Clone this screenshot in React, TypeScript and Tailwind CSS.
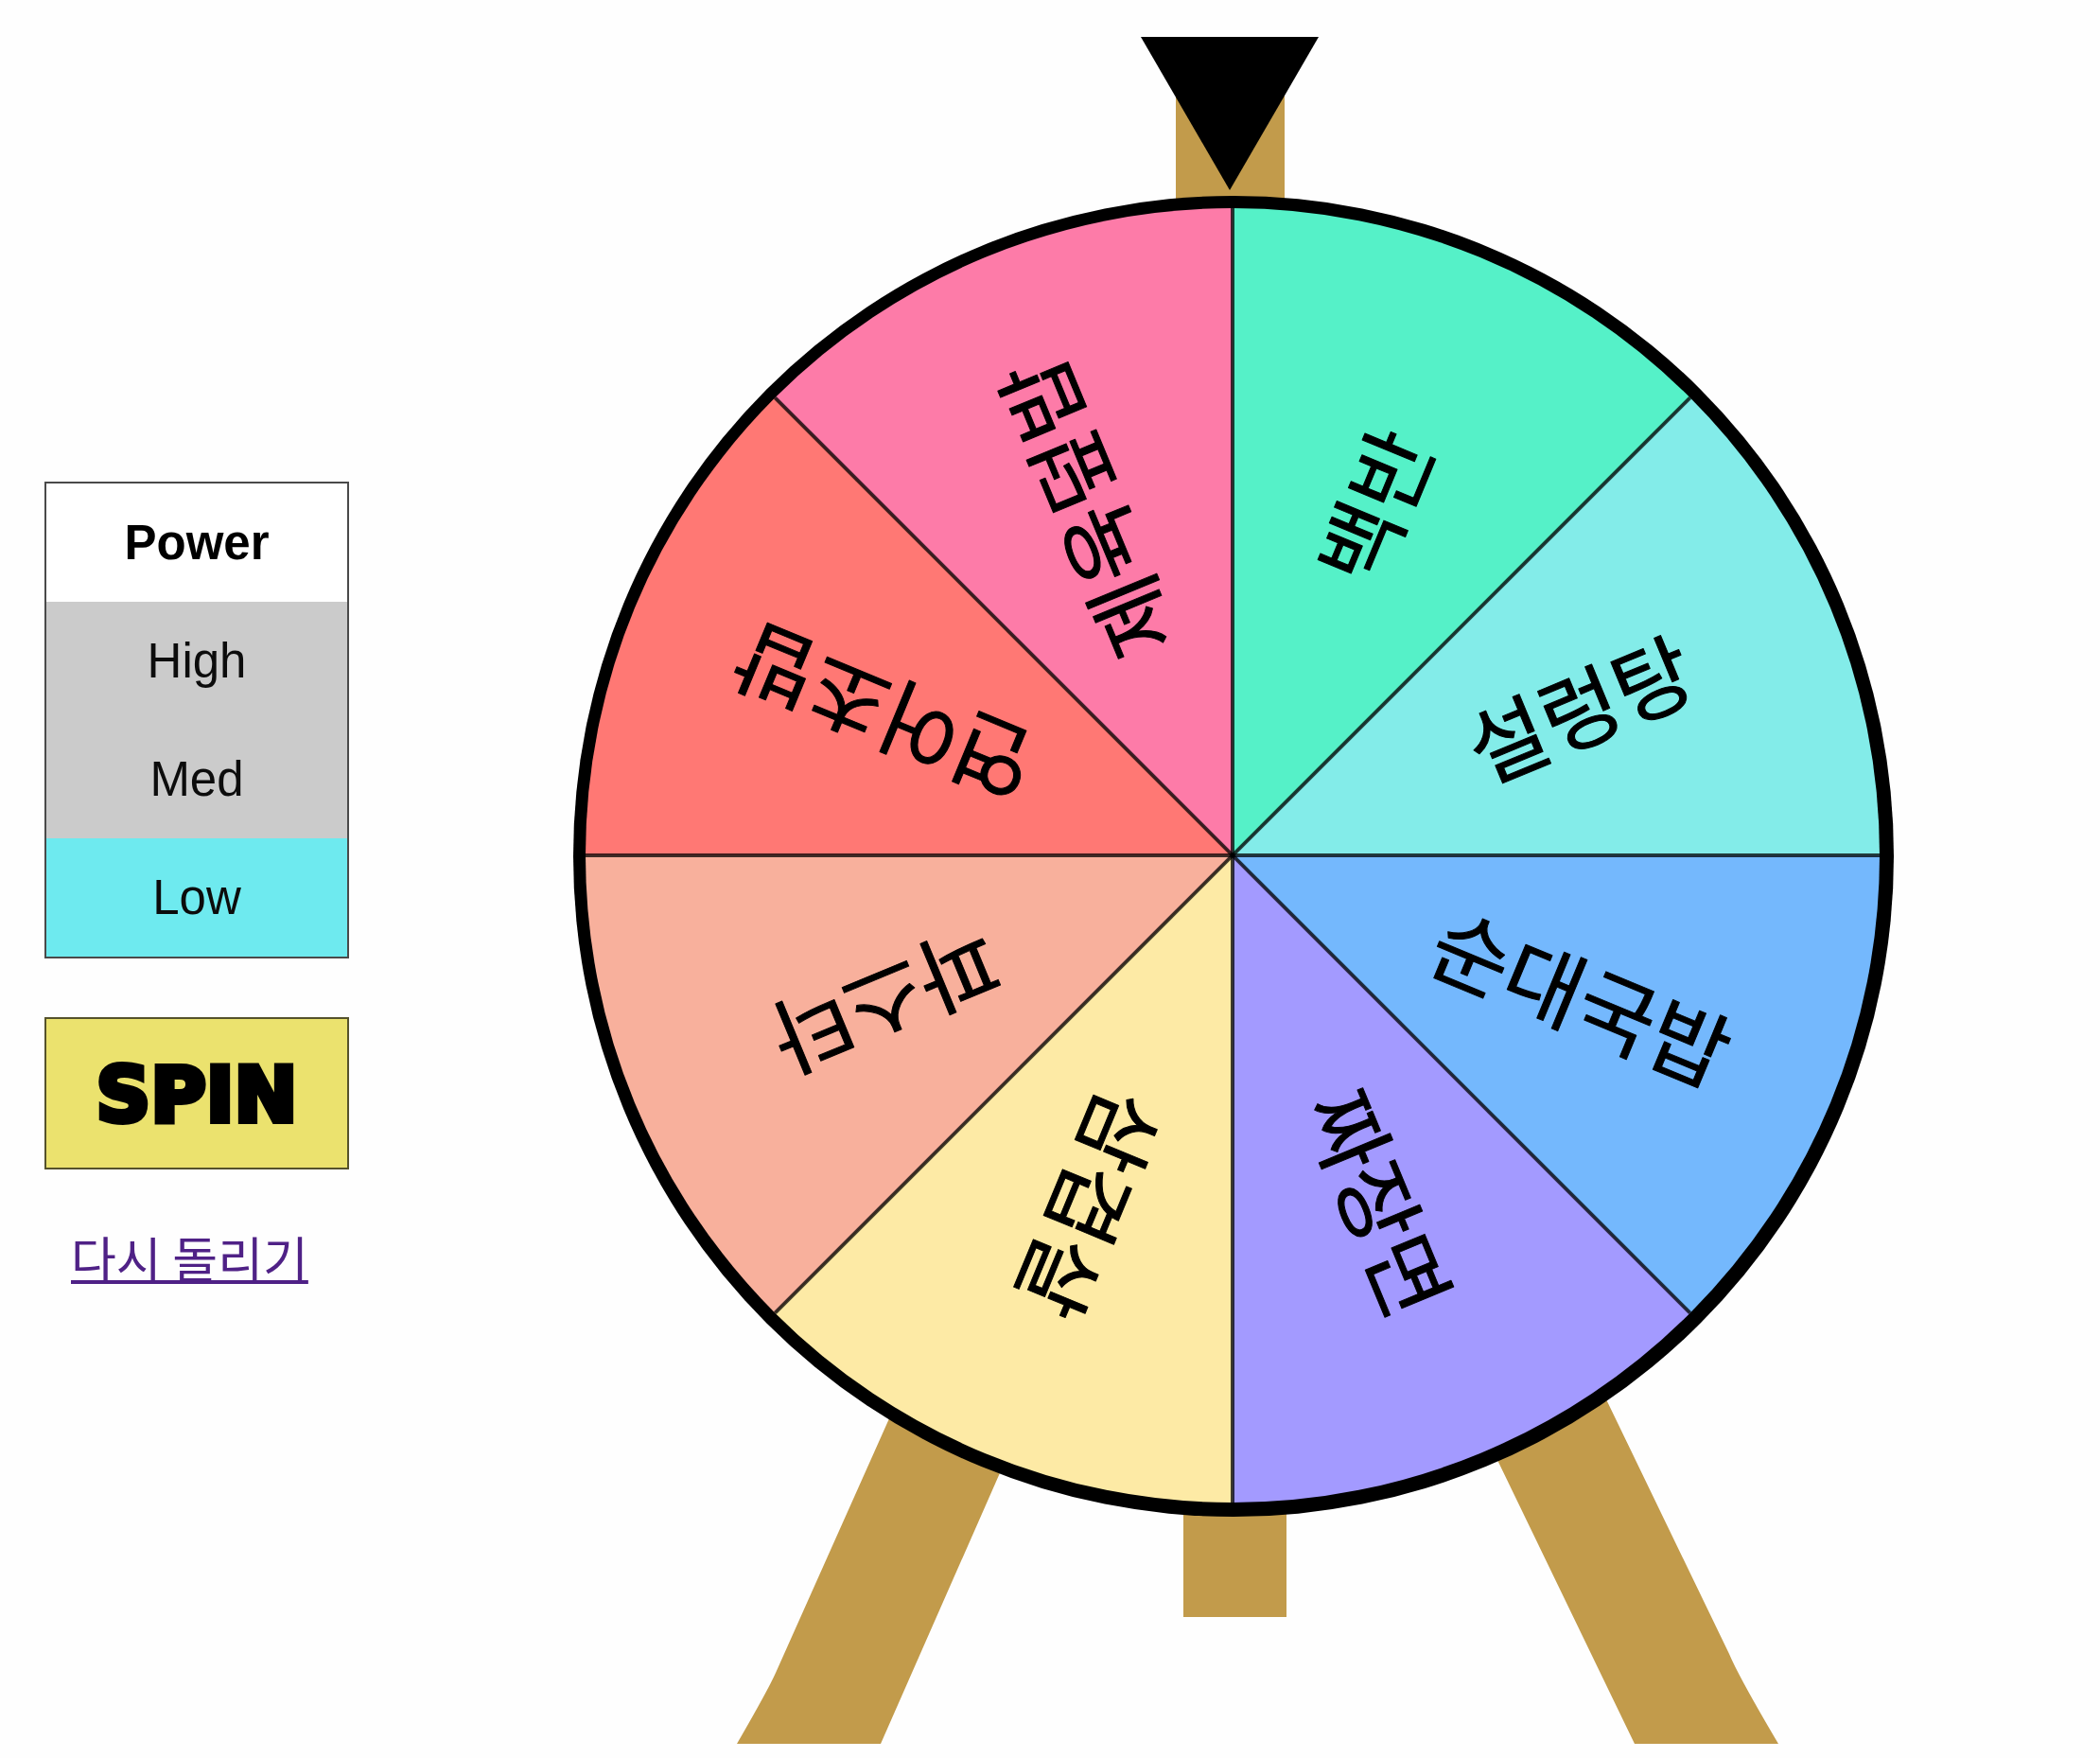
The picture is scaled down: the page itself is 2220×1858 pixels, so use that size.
import { useState } from "react";

const CX = 1303;
const CY = 904;
const R = 684;
const LABEL_RADIUS = 398;

const SEGMENTS = [
  { label: "설렁탕", color: "#83ece9", angle: -22.5 },
  { label: "순대국밥", color: "#74b8fd", angle: 22.5 },
  { label: "짜장면", color: "#a39aff", angle: 67.5 },
  { label: "삼겹살", color: "#fdeaa5", angle: 112.5 },
  { label: "파스타", color: "#f8b09c", angle: 157.5 },
  { label: "연어초밥", color: "#ff7874", angle: 202.5 },
  { label: "제육덮밥", color: "#fd7ba8", angle: 247.5 },
  { label: "백반", color: "#55f1c8", angle: 292.5 },
];

const POWERS = [
  { value: "high", label: "High", turns: 8 },
  { value: "med", label: "Med", turns: 5 },
  { value: "low", label: "Low", turns: 3 },
];

function rim(degrees: number) {
  const a = (degrees * Math.PI) / 180;
  return `${CX + R * Math.cos(a)} ${CY + R * Math.sin(a)}`;
}

function Wheel({ rotation }: { rotation: number }) {
  return (
    <svg
      viewBox="369 0 1851 1858"
      className="block h-auto min-w-0 flex-1"
      role="img"
      aria-label="점심 메뉴 돌림판"
    >
      {/* wooden stand */}
      <g fill="#c29b4b">
        <path d="M1243 100H1358V300H1243Z" />
        <path d="M1251 1500H1360V1709H1251Z" />
        <path d="M962 1450L820 1768Q812 1786 779 1843H931L1104 1450Z" />
        <path d="M1684 1450L1828 1748Q1838 1772 1880 1843H1728L1538 1450Z" />
      </g>
      <circle cx="1304" cy="905" r="698" fill="#000" />
      <g
        className="origin-[1303px_904px] transition-transform duration-[4000ms] ease-out"
        style={{ transform: `rotate(${rotation}deg)` }}
      >
        {SEGMENTS.map((s) => (
          <path
            key={s.label}
            d={`M${CX} ${CY}L${rim(s.angle - 22.5)}A${R} ${R} 0 0 1 ${rim(s.angle + 22.5)}Z`}
            fill={s.color}
          />
        ))}
        {[0, 45, 90, 135].map((a) => (
          <path
            key={a}
            d={`M${rim(a)}L${rim(a + 180)}`}
            stroke="#000"
            strokeOpacity="0.75"
            strokeWidth="4"
          />
        ))}
        {SEGMENTS.map((s) => (
          <text
            key={s.label}
            x={CX + LABEL_RADIUS}
            y={CY + 33}
            transform={`rotate(${s.angle} ${CX} ${CY})`}
            textAnchor="middle"
            stroke="#000"
            strokeWidth="1"
            strokeLinejoin="round"
            className="font-['Noto_Sans_CJK_KR',sans-serif] text-[90px] font-normal"
          >
            {s.label}
          </text>
        ))}
      </g>
      <path d="M1206 39H1394L1300 201Z" fill="#000" />
    </svg>
  );
}

export default function App() {
  const [power, setPower] = useState("low");
  const [rotation, setRotation] = useState(0);

  const spin = () => {
    const turns = POWERS.find((p) => p.value === power)?.turns ?? 3;
    setRotation(rotation + turns * 360 + Math.floor(Math.random() * 360));
  };

  return (
    <main className="flex items-start bg-[#fefefe] pl-[47px] font-['Liberation_Sans',Arial,sans-serif] text-black">
      <aside className="flex w-[322px] shrink-0 flex-col gap-[62px] pt-[509px]">
        <div
          role="radiogroup"
          aria-labelledby="power-title"
          className="border-2 border-[#4a4a4a] text-center text-[51px] leading-[125px]"
        >
          <h2 id="power-title" className="bg-white font-bold">
            Power
          </h2>
          {POWERS.map((p) => (
            <label
              key={p.value}
              className="relative block cursor-pointer bg-[#cbcbcb] text-[#0c0c0c] has-checked:bg-[#6eeaef]"
            >
              <input
                type="radio"
                name="power"
                value={p.value}
                checked={power === p.value}
                onChange={() => setPower(p.value)}
                className="sr-only"
              />
              {p.label}
            </label>
          ))}
        </div>
        <button
          type="button"
          onClick={spin}
          className="h-[161px] cursor-pointer border-2 border-[#55522c] bg-[#ebe26e] pt-1 font-['DejaVu_Sans',sans-serif] text-[80px] font-bold [-webkit-text-stroke:6px_black]"
        >
          SPIN
        </button>
        <a
          href="#"
          onClick={(e) => {
            e.preventDefault();
            setRotation(0);
          }}
          className="ml-7 self-start font-['Noto_Sans_CJK_KR',sans-serif] text-[52px] leading-[62px] font-normal text-[#4f2186] underline decoration-4"
        >
          다시 돌리기
        </a>
      </aside>
      <Wheel rotation={rotation} />
    </main>
  );
}
